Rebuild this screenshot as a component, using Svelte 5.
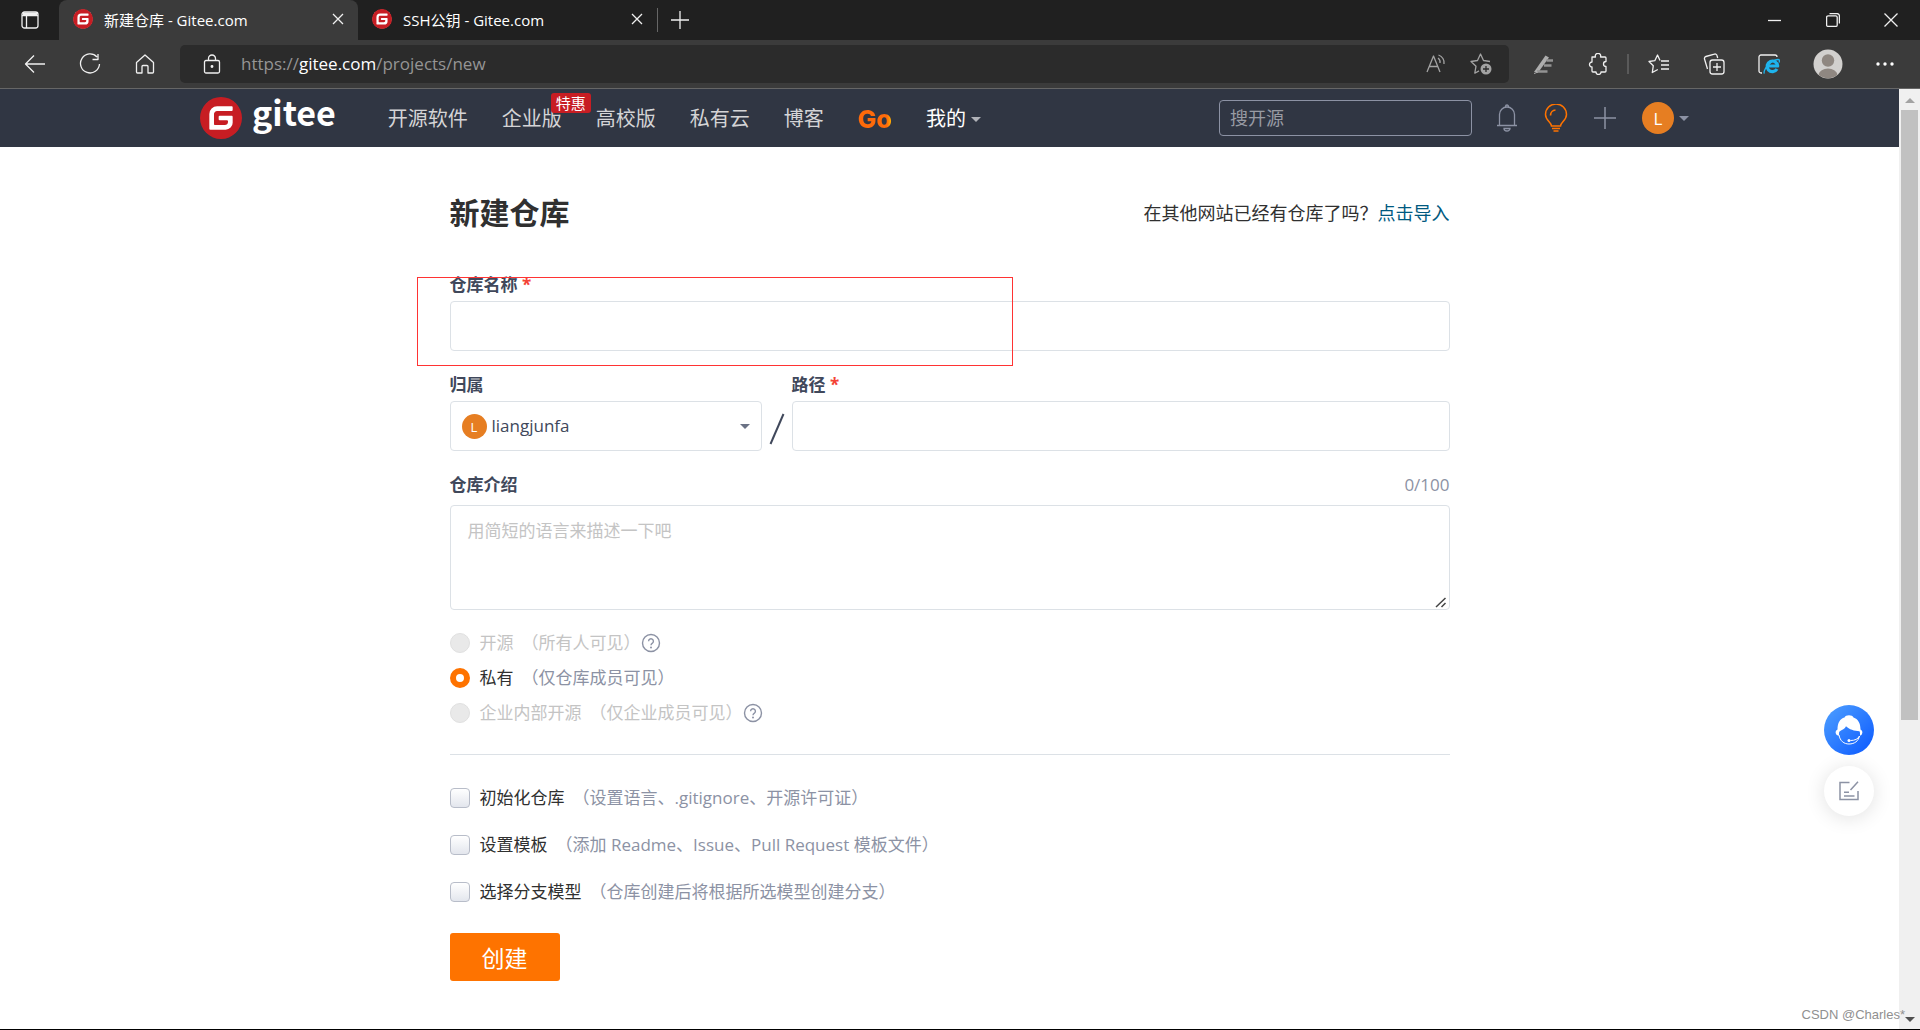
<script>
  let name = $state('');
  let path = $state('');
  let description = $state('');
  let visibility = $state('private');

  const tabs = [
    { title: '新建仓库 - Gitee.com', active: true },
    { title: 'SSH公钥 - Gitee.com', active: false }
  ];

  const levels = [
    { value: 'public', label: '开源', hint: '（所有人可见）', disabled: true, help: true },
    { value: 'private', label: '私有', hint: '（仅仓库成员可见）', disabled: false, help: false },
    { value: 'inner', label: '企业内部开源', hint: '（仅企业成员可见）', disabled: true, help: true }
  ];

  const options = [
    { id: 'init', label: '初始化仓库', hint: '（设置语言、.gitignore、开源许可证）' },
    { id: 'template', label: '设置模板', hint: '（添加 Readme、Issue、Pull Request 模板文件）' },
    { id: 'branch', label: '选择分支模型', hint: '（仓库创建后将根据所选模型创建分支）' }
  ];
</script>

{#snippet logo(size)}
  <svg class="logo" width={size} height={size} viewBox="0 0 24 24" aria-hidden="true">
    <circle cx="12" cy="12" r="11.5" fill="#fff" />
    <path
      fill="#c71d23"
      d="M11.984 0A12 12 0 0 0 0 12a12 12 0 0 0 12 12 12 12 0 0 0 12-12A12 12 0 0 0 12 0a12 12 0 0 0-.016 0zm6.09 5.333c.328 0 .593.266.592.593v1.482a.594.594 0 0 1-.593.592H9.777c-.982 0-1.778.796-1.778 1.778v5.63c0 .327.266.592.593.592h5.63c.982 0 1.778-.796 1.778-1.778v-.296a.593.593 0 0 0-.592-.593h-4.15a.592.592 0 0 1-.592-.592v-1.482a.593.593 0 0 1 .593-.592h6.815c.327 0 .593.265.593.592v3.408a4 4 0 0 1-4 4H5.926a.593.593 0 0 1-.593-.593V9.778a4.444 4.444 0 0 1 4.445-4.444h8.296Z"
    />
  </svg>
{/snippet}

{#snippet closeIcon()}
  <svg width="12" height="12" viewBox="0 0 12 12"><path d="M1 1l10 10M11 1L1 11" /></svg>
{/snippet}

{#snippet helpIcon()}
  <svg class="help" width="20" height="20" viewBox="0 0 20 20" aria-hidden="true">
    <circle cx="10" cy="10" r="8.5" />
    <path d="M7.6 8.2a2.4 2.4 0 1 1 3.8 2c-1 .6-1.4 1-1.4 2" />
    <circle class="dot" cx="10" cy="14.4" r="1" />
  </svg>
{/snippet}

<div class="window">
  <header class="tab-strip">
    <button class="tab-menu" aria-label="Tab actions">
      <svg width="18" height="18" viewBox="0 0 18 18">
        <rect x="1" y="1" width="16" height="16" rx="2.5" />
        <path d="M1 4.5h16M5.5 5v12" />
        <path d="M2 3h14" stroke-width="3" />
      </svg>
    </button>
    {#each tabs as tab}
      <div class="tab" class:active={tab.active}>
        {@render logo(20)}
        <span class="tab-title">{tab.title}</span>
        <button aria-label="Close tab">{@render closeIcon()}</button>
      </div>
    {/each}
    <button class="new-tab" aria-label="New tab">
      <svg width="18" height="18" viewBox="0 0 18 18"><path d="M9 0v18M0 9h18" /></svg>
    </button>
    <div class="window-buttons">
      <button aria-label="Minimize">
        <svg width="14" height="14" viewBox="0 0 14 14"><path d="M0 7.5h13" /></svg>
      </button>
      <button aria-label="Restore">
        <svg width="14" height="14" viewBox="0 0 14 14">
          <rect x=".6" y="2.8" width="10.6" height="10.6" rx="1.5" />
          <path d="M3.5.6h7.4a2.5 2.5 0 0 1 2.5 2.5v7.4" />
        </svg>
      </button>
      <button aria-label="Close">
        <svg width="14" height="14" viewBox="0 0 14 14"><path d="M.5.5l13 13M13.5.5l-13 13" /></svg>
      </button>
    </div>
  </header>

  <div class="toolbar">
    <div class="nav-buttons">
      <button aria-label="Back">
        <svg width="22" height="20" viewBox="0 0 22 20"><path d="M21 10H1.5M10 1.5L1.5 10l8.5 8.5" /></svg>
      </button>
      <button aria-label="Refresh">
        <svg width="22" height="22" viewBox="0 0 22 22">
          <path d="M18 4a9.5 9.5 0 1 0 2.5 7M19 1v5.500h-5.500" />
        </svg>
      </button>
      <button aria-label="Home">
        <svg width="20" height="20" viewBox="0 0 20 20">
          <path d="M1.5 8.500L10 1l8.500 7.500V18a1 1 0 0 1-1 1H13v-6.500a1 1 0 0 0-1-1H8a1 1 0 0 0-1 1V19H2.500a1 1 0 0 1-1-1z" />
        </svg>
      </button>
    </div>
    <div class="address">
      <svg width="18" height="20" viewBox="0 0 18 20">
        <rect x="1.5" y="6.5" width="15" height="12.5" rx="1.5" />
        <path d="M5.5 6.500V4.500a3.500 3.500 0 0 1 7 0v2" />
        <circle cx="9" cy="12.5" r=".8" fill="#fff" />
      </svg>
      <span class="url">https://<b>gitee.com</b>/projects/new</span>
      <div class="address-actions">
        <button aria-label="Read aloud">
          <svg width="20" height="20" viewBox="0 0 20 20">
            <path d="M1 18L7.500 2 14 18M3.200 12.500h8.600M12 4a5 5 0 0 1 2 5M12.500 1a8 8 0 0 1 5.500 9" />
          </svg>
        </button>
        <button aria-label="Add to favorites">
          <svg width="22" height="22" viewBox="0 0 22 22">
            <path d="M20 8.500l-6.500-1L10.500 1l-3 6.500-6.500 1 5 4.700-1.200 7 4.200-2.300" />
            <circle cx="16" cy="16" r="5.5" fill="#a3a3a3" stroke="none" />
            <path d="M16 13v6M13 16h6" stroke="#2b2b2b" />
          </svg>
        </button>
      </div>
    </div>
    <div class="extensions">
      <button aria-label="Pen extension">
        <svg width="22" height="20" viewBox="0 0 22 20" class="solid">
          <path d="M1 18L12.500 1.500 16 3.500 5.500 18z" fill="#adadad" />
          <path d="M13.500 6.500H20M11 11.500h7.500M4 17.500h10.500" stroke="#939393" stroke-width="2.400" />
          <path d="M1 19.500l4-1.500" stroke="#adadad" />
        </svg>
      </button>
      <button aria-label="Extensions">
        <svg width="20" height="22" viewBox="0 0 20 22">
          <path d="M4 4h3.500a2.700 2.700 0 1 1 5 0H17a1 1 0 0 1 1 1v3.500a2.500 2.500 0 1 0 0 5V18a1 1 0 0 1-1 1h-4a2.500 2.500 0 0 1-5 0H5a1 1 0 0 1-1-1v-4a2.500 2.500 0 1 1 0-5z" />
        </svg>
      </button>
      <i class="divider"></i>
      <button aria-label="Favorites">
        <svg width="22" height="20" viewBox="0 0 22 20">
          <path d="M12 6.500L9.500 1 6.800 6.700 1 7.500l4.300 4.200-1 6.800 5.500-3M13 7h8M13 11h8M13 15h8" />
        </svg>
      </button>
      <button aria-label="Collections">
        <svg width="22" height="22" viewBox="0 0 22 22">
          <rect x="7" y="7" width="14" height="14" rx="2.5" />
          <path d="M14 10v8M10 14h8M4.500 16L1.500 6a2 2 0 0 1 1.400-2.500l8.500-2.400A2 2 0 0 1 14 2.500L14.700 5" />
        </svg>
      </button>
      <button aria-label="Internet Explorer mode">
        <svg width="22" height="22" viewBox="0 0 22 22">
          <path d="M4 20H3a2 2 0 0 1-2-2V4a2 2 0 0 1 2-2h14a2 2 0 0 1 2 2" />
          <path d="M19 16a5.300 5.300 0 1 1 .7-3H9.500" stroke="#1eb4ed" stroke-width="3.200" />
          <path d="M6.500 20.500c-2.500-2 6-14 13.500-14 2 0 1.500 2 1 3" stroke="#1eb4ed" />
        </svg>
      </button>
      <button aria-label="Profile">
        <svg width="30" height="30" viewBox="0 0 30 30" class="solid">
          <circle cx="15" cy="15" r="14.5" fill="#d2d0ce" />
          <circle cx="15" cy="11.5" r="6.2" fill="#8f8781" />
          <path d="M5.500 25.500a9.600 7 0 0 1 19 0 14 14 0 0 1-19 0z" fill="#8f8781" />
        </svg>
      </button>
      <button aria-label="Settings and more">
        <svg width="18" height="6" viewBox="0 0 18 6" class="solid">
          <g fill="#fff"><circle cx="2" cy="3" r="1.7" /><circle cx="9" cy="3" r="1.7" /><circle cx="16" cy="3" r="1.7" /></g>
        </svg>
      </button>
    </div>
  </div>

  <div class="viewport">
    <div class="page">
      <nav class="site-nav">
        <div class="site-inner">
          <a class="brand" href="/">
            {@render logo(42)}
            <span>gitee</span>
          </a>
          <div class="links">
            <a href="/explore">开源软件</a>
            <a class="enterprise" href="/enterprises">企业版<span class="badge">特惠</span></a>
            <a href="/education">高校版</a>
            <a href="/premium">私有云</a>
            <a href="/blog">博客</a>
            <a class="go" href="/go">Go</a>
            <a class="mine" href="/dashboard">我的<i class="caret"></i></a>
          </div>
          <input class="search" type="search" placeholder="搜开源" aria-label="搜开源" />
          <div class="user-tools">
            <a href="/notifications" aria-label="Notifications">
              <svg width="22" height="28" viewBox="0 0 22 28" stroke="#8c92a4" stroke-width="1.3">
                <path d="M3.500 21V10.500a7.500 7.500 0 0 1 15 0V21M1 21.500h20M9.500 2.500a1.500 1.500 0 0 1 3 0M8 24.500h6a3 2.500 0 0 1-6 0z" />
              </svg>
            </a>
            <a href="/tips" aria-label="Tips">
              <svg width="24" height="28" viewBox="0 0 24 28" stroke="#fe7300">
                <path d="M7.500 22c0-3.500-6-5.500-6-11.500a10.500 10.500 0 0 1 21 0c0 6-6 8-6 11.500z" stroke-width="1.500" />
                <path d="M6.500 11.500a5.500 5.500 0 0 1 5-5.500M8 24.500h8M9.500 27h5" stroke-width="1.700" />
              </svg>
            </a>
            <a href="/new" aria-label="New">
              <svg width="22" height="22" viewBox="0 0 22 22" stroke="#8c92a4" stroke-width="1.5"><path d="M11 0v22M0 11h22" /></svg>
            </a>
            <a class="account" href="/profile"><span class="avatar">L</span><i class="caret"></i></a>
          </div>
        </div>
      </nav>

      <main>
        <div class="title-row">
          <h1>新建仓库</h1>
          <p>在其他网站已经有仓库了吗？<a href="/import">点击导入</a></p>
        </div>

        <form onsubmit={(e) => e.preventDefault()}>
          <div class="field name-field">
            <label for="name">仓库名称 <em>*</em></label>
            <input id="name" type="text" bind:value={name} />
            <div class="highlight"></div>
          </div>

          <div class="field-row">
            <div class="field owner">
              <label for="owner">归属</label>
              <div class="select-box">
                <select id="owner"><option>liangjunfa</option></select>
                <span class="avatar small">L</span>
                <i class="caret"></i>
              </div>
            </div>
            <svg class="slash" width="16" height="32" viewBox="0 0 16 32"><path d="M1.500 31L14.500 1" /></svg>
            <div class="field path">
              <label for="path">路径 <em>*</em></label>
              <input id="path" type="text" bind:value={path} />
            </div>
          </div>

          <div class="field description">
            <div class="label-row">
              <label for="description">仓库介绍</label>
              <span>{description.length}/100</span>
            </div>
            <textarea
              id="description"
              maxlength="100"
              placeholder="用简短的语言来描述一下吧"
              bind:value={description}
            ></textarea>
            <svg class="grip" width="12" height="12" viewBox="0 0 12 12"><path d="M1 11L10.500 2M6.500 11l4-4" /></svg>
          </div>

          <div class="levels">
            {#each levels as level}
              <label class="choice" class:disabled={level.disabled}>
                <input type="radio" name="visibility" value={level.value} disabled={level.disabled} bind:group={visibility} />
                <span>{level.label}</span>
                <small>{level.hint}</small>
                {#if level.help}{@render helpIcon()}{/if}
              </label>
            {/each}
          </div>

          <div class="options">
            {#each options as option}
              <label class="choice">
                <input type="checkbox" name={option.id} />
                <span>{option.label}</span>
                <small>{option.hint}</small>
              </label>
            {/each}
          </div>

          <button class="submit" type="submit">创建</button>
        </form>
      </main>
    </div>

    <div class="scrollbar">
      <i class="arrow up"></i>
      <div class="thumb"></div>
      <i class="arrow down"></i>
    </div>
  </div>

  <div class="floating">
    <button class="service" aria-label="Customer service">
      <svg width="28" height="32" viewBox="0 0 28 32">
        <path fill="#fff" d="M1 20C0 18 1 16 2.500 15.500 2.500 9 5 4.500 9.500 3.500c1-3 8-3 9 0C23 5 25.500 9 25.500 15.500 27 16 28 18 27 20c-.5 1-1.500 1.500-2 1.500 0-2 .2-3-.5-4.200-5-.3-10.500-1.800-13.500-5-1 2.500-4 3.500-6.500 5.200-.7 1-.5 2-.5 4-1 0-2.500-.5-3-1.500z" />
        <path stroke="#fff" d="M4 21c1 6 5 9 10 9 5.500 0 9.500-3 10.500-8-1.500 3-4.500 4.500-9 4.500" />
        <circle cx="14" cy="26.5" r="1.5" fill="#fff" />
      </svg>
    </button>
    <button class="feedback" aria-label="Feedback">
      <svg width="20" height="20" viewBox="0 0 20 20">
        <path d="M10.500 1.500H1v17h18V10M11.500 9L19 .8M5 11.200h5M5 15h10.500" />
      </svg>
    </button>
  </div>
  <div class="watermark">CSDN @Charles*</div>
</div>

<style>
  :global(body) {
    margin: 0;
    background: #fff;
    font-family: 'Open Sans', 'Noto Sans CJK SC', sans-serif;
  }

  .window,
  .window * {
    box-sizing: border-box;
  }

  .window {
    position: relative;
    display: flex;
    flex-direction: column;
    min-height: 100vh;
    border-bottom: 1px solid #000;
  }

  svg {
    display: block;
    flex: none;
    fill: none;
  }

  button,
  input,
  select,
  textarea {
    font-family: inherit;
  }

  a {
    color: inherit;
    text-decoration: none;
  }

  /* browser chrome */
  .tab-strip,
  .toolbar {
    display: flex;
    align-items: center;
    color: #fff;
  }

  .tab-strip {
    height: 40px;
    background: #202020;
  }

  .tab-strip button,
  .toolbar button {
    display: flex;
    align-items: center;
    justify-content: center;
    padding: 0;
    border: 0;
    background: none;
  }

  .tab-strip svg:not(.logo),
  .toolbar svg:not(.solid) {
    stroke: #f0f0f0;
    stroke-width: 1.3;
    stroke-linejoin: round;
  }

  .tab-menu {
    width: 59px;
    height: 40px;
  }

  .tab {
    display: flex;
    align-items: center;
    gap: 11px;
    width: 299px;
    height: 40px;
    padding: 0 14px 2px;
    font-size: 15px;
  }

  .tab.active {
    background: #3b3b3b;
    border-radius: 8px 8px 0 0;
  }

  .tab-title {
    flex: 1;
    white-space: nowrap;
  }

  .tab-strip .new-tab {
    width: 44px;
    height: 24px;
    border-left: 1px solid #666;
  }

  .window-buttons {
    display: flex;
    margin-left: auto;
  }

  .window-buttons button {
    width: 58px;
    height: 40px;
  }

  .toolbar {
    height: 49px;
    padding-bottom: 1px;
    background: #3b3b3b;
    border-bottom: 1px solid #666;
  }

  .nav-buttons {
    display: flex;
    padding: 0 8px 0 7px;
  }

  .nav-buttons button {
    width: 55px;
    height: 38px;
  }

  .address {
    display: flex;
    flex: 1;
    align-items: center;
    gap: 20px;
    height: 38px;
    padding: 0 17px 0 23px;
    border-radius: 5px;
    background: #2b2b2b;
  }

  .url {
    flex: 1;
    color: #959595;
    font-size: 17px;
  }

  .url b {
    color: #fff;
    font-weight: 400;
  }

  .address-actions {
    display: flex;
    gap: 24px;
  }

  .toolbar .address-actions svg {
    stroke: #a3a3a3;
  }

  .extensions {
    display: flex;
    align-items: center;
    gap: 33px;
    padding: 0 26px 0 24px;
  }

  .divider {
    width: 2px;
    height: 20px;
    margin: 0 -14px;
    background: #5a5a5a;
  }

  /* site header */
  .viewport {
    display: flex;
    flex: 1;
  }

  .page {
    flex: 1;
  }

  .site-nav {
    padding: 0 210px 0 200px;
    background: #303643;
  }

  .site-inner {
    display: flex;
    align-items: center;
    height: 58px;
    color: #d4d4d6;
    font-size: 20px;
  }

  .brand {
    display: flex;
    align-items: center;
    gap: 10px;
    color: #fff;
    font: 700 34px/34px 'Noto Sans CJK SC', sans-serif;
  }

  .brand span {
    padding-bottom: 12px;
  }

  .links {
    display: flex;
    align-items: center;
    gap: 34px;
    margin-left: 52px;
    padding-top: 2px;
    line-height: 30px;
    white-space: nowrap;
  }

  .enterprise {
    position: relative;
  }

  .badge {
    position: absolute;
    top: -11px;
    left: 49px;
    width: 40px;
    border-radius: 3px;
    background: #c71d23;
    color: #fff;
    font-size: 15px;
    line-height: 20px;
    text-align: center;
  }

  .go {
    background: linear-gradient(90deg, #fe6a0a 85%, #ffc100);
    background-clip: text;
    color: transparent;
    font: 800 25px/30px Inter, sans-serif;
  }

  .mine {
    display: flex;
    align-items: center;
    gap: 5px;
    color: #fff;
  }

  .caret {
    border: 5px solid transparent;
    border-top-color: #8c92a4;
    border-bottom: 0;
  }

  .mine .caret {
    border-top-color: #b0b2b8;
  }

  .search {
    width: 253px;
    height: 36px;
    margin-left: auto;
    padding: 0 10px;
    border: 1px solid #8c92a4;
    border-radius: 4px;
    background: transparent;
    color: #fff;
    font-size: 18px;
  }

  .search::placeholder {
    color: #989ba3;
  }

  .user-tools {
    display: flex;
    align-items: center;
    gap: 26px;
    margin-left: 24px;
  }

  .account {
    display: flex;
    align-items: center;
    gap: 5px;
  }

  .avatar {
    display: flex;
    align-items: center;
    justify-content: center;
    width: 32px;
    height: 32px;
    border-radius: 50%;
    background: #e67e22;
    color: #fff;
    font-size: 17px;
  }

  /* repository form */
  main {
    width: 1000px;
    margin: 0 auto;
    padding: 46px 0 40px;
    color: #40485b;
    font-size: 17px;
    line-height: 24px;
  }

  .title-row {
    display: flex;
    align-items: center;
    justify-content: space-between;
    height: 40px;
    margin-bottom: 40px;
    color: #303030;
  }

  h1 {
    margin: 0;
    font-size: 30px;
    line-height: 38px;
  }

  .title-row p {
    margin: 0;
    font-size: 18px;
  }

  .title-row a {
    color: #005980;
  }

  .field {
    display: flex;
    flex-direction: column;
    gap: 4px;
  }

  .field label {
    font-weight: 700;
  }

  em {
    color: #f44336;
    font-style: normal;
  }

  .field input,
  .field select,
  .field textarea {
    width: 100%;
    height: 50px;
    border: 1px solid #dce1e6;
    border-radius: 4px;
    background: #fff;
    color: #40485b;
    font-size: 17px;
  }

  .field input {
    padding: 0 17px;
  }

  .name-field {
    position: relative;
    margin-bottom: 22px;
  }

  /* annotation frame drawn over the name field */
  .highlight {
    position: absolute;
    top: 4px;
    left: -33px;
    width: 596px;
    height: 89px;
    border: 1px solid #f33;
    pointer-events: none;
  }

  .field-row {
    display: flex;
    align-items: flex-end;
  }

  .owner {
    width: 312px;
  }

  .slash {
    margin: 0 7px 6px;
    stroke: #40485b;
    stroke-width: 2;
  }

  .path {
    flex: 1;
  }

  .select-box {
    position: relative;
  }

  .field select {
    display: block;
    appearance: none;
    padding: 0 30px 2px 41px;
  }

  .small {
    position: absolute;
    top: 13px;
    left: 12px;
    width: 25px;
    height: 25px;
    font-size: 13px;
  }

  .select-box .caret {
    position: absolute;
    top: 23px;
    right: 12px;
    border-top-color: #6b7285;
  }

  .description {
    position: relative;
    gap: 8px;
    margin-top: 22px;
  }

  .label-row {
    display: flex;
    justify-content: space-between;
  }

  .label-row span {
    color: #8c92a4;
  }

  .field textarea {
    height: 105px;
    padding: 13px 17px;
    line-height: 24px;
    resize: vertical;
  }

  textarea::placeholder {
    color: #c4c4c4;
  }

  textarea::-webkit-resizer {
    background: transparent;
  }

  .grip {
    position: absolute;
    right: 3px;
    bottom: 2px;
    stroke: #444;
    stroke-width: 1.5;
    pointer-events: none;
  }

  .levels {
    display: flex;
    flex-direction: column;
    gap: 11px;
    padding: 21px 0 29px;
    border-bottom: 1px solid #dce1e6;
  }

  .choice {
    display: flex;
    align-items: center;
    color: #303030;
  }

  .choice input {
    appearance: none;
    width: 20px;
    height: 20px;
    margin: 0 10px 0 0;
  }

  .choice small {
    margin-left: 8px;
    color: #8c92a4;
    font-size: 17px;
  }

  .choice.disabled,
  .choice.disabled small {
    color: #c4c4c4;
  }

  input[type='radio'] {
    border: 1px solid #e0e0e0;
    border-radius: 50%;
    background: #e9e9e9;
  }

  input[type='radio']:checked {
    border: 6px solid #fe7300;
    background: #fff;
  }

  input[type='checkbox'] {
    border: 1px solid #b8bdc9;
    border-radius: 4px;
    background: linear-gradient(#fff, #e3e6ed);
  }

  input[type='checkbox']:checked {
    background: #fe7300;
  }

  .help {
    stroke: #8c92a4;
    stroke-width: 1.4;
  }

  .help .dot {
    fill: #8c92a4;
    stroke: none;
  }

  .options {
    display: flex;
    flex-direction: column;
    gap: 23px;
    padding: 31px 0 29px;
  }

  .submit {
    display: block;
    width: 110px;
    height: 48px;
    border: 0;
    border-radius: 3px;
    background: #fe7300;
    color: #fff;
    font-size: 23px;
  }

  /* window scrollbar */
  .scrollbar {
    display: flex;
    flex-direction: column;
    align-items: center;
    width: 21px;
    padding: 9px 0 7px;
    background: #f0f0f0;
  }

  .thumb {
    flex: none;
    width: 17px;
    height: 66%;
    margin-top: 7px;
    background: #c1c1c1;
  }

  .arrow {
    border: 5px solid transparent;
  }

  .up {
    border-top: 0;
    border-bottom-color: #a3a3a3;
  }

  .down {
    margin-top: auto;
    border-top-color: #505050;
    border-bottom: 0;
  }

  /* buttons pinned over the page */
  .floating {
    position: fixed;
    right: 46px;
    bottom: 214px;
    display: flex;
    flex-direction: column;
    gap: 11px;
  }

  .floating button {
    display: flex;
    align-items: center;
    justify-content: center;
    width: 50px;
    height: 50px;
    padding: 0;
    border: 0;
    border-radius: 50%;
  }

  .service {
    background: linear-gradient(135deg, #4fa0ff, #0a58ff);
  }

  .feedback {
    background: #fff;
    box-shadow: 0 2px 20px rgba(0, 0, 0, 0.12);
  }

  .feedback svg {
    stroke: #8c92a4;
    stroke-width: 1.5;
  }

  .watermark {
    position: absolute;
    right: 15px;
    bottom: 4px;
    color: #909090;
    font: 13px/20px 'Liberation Sans', sans-serif;
  }
</style>
